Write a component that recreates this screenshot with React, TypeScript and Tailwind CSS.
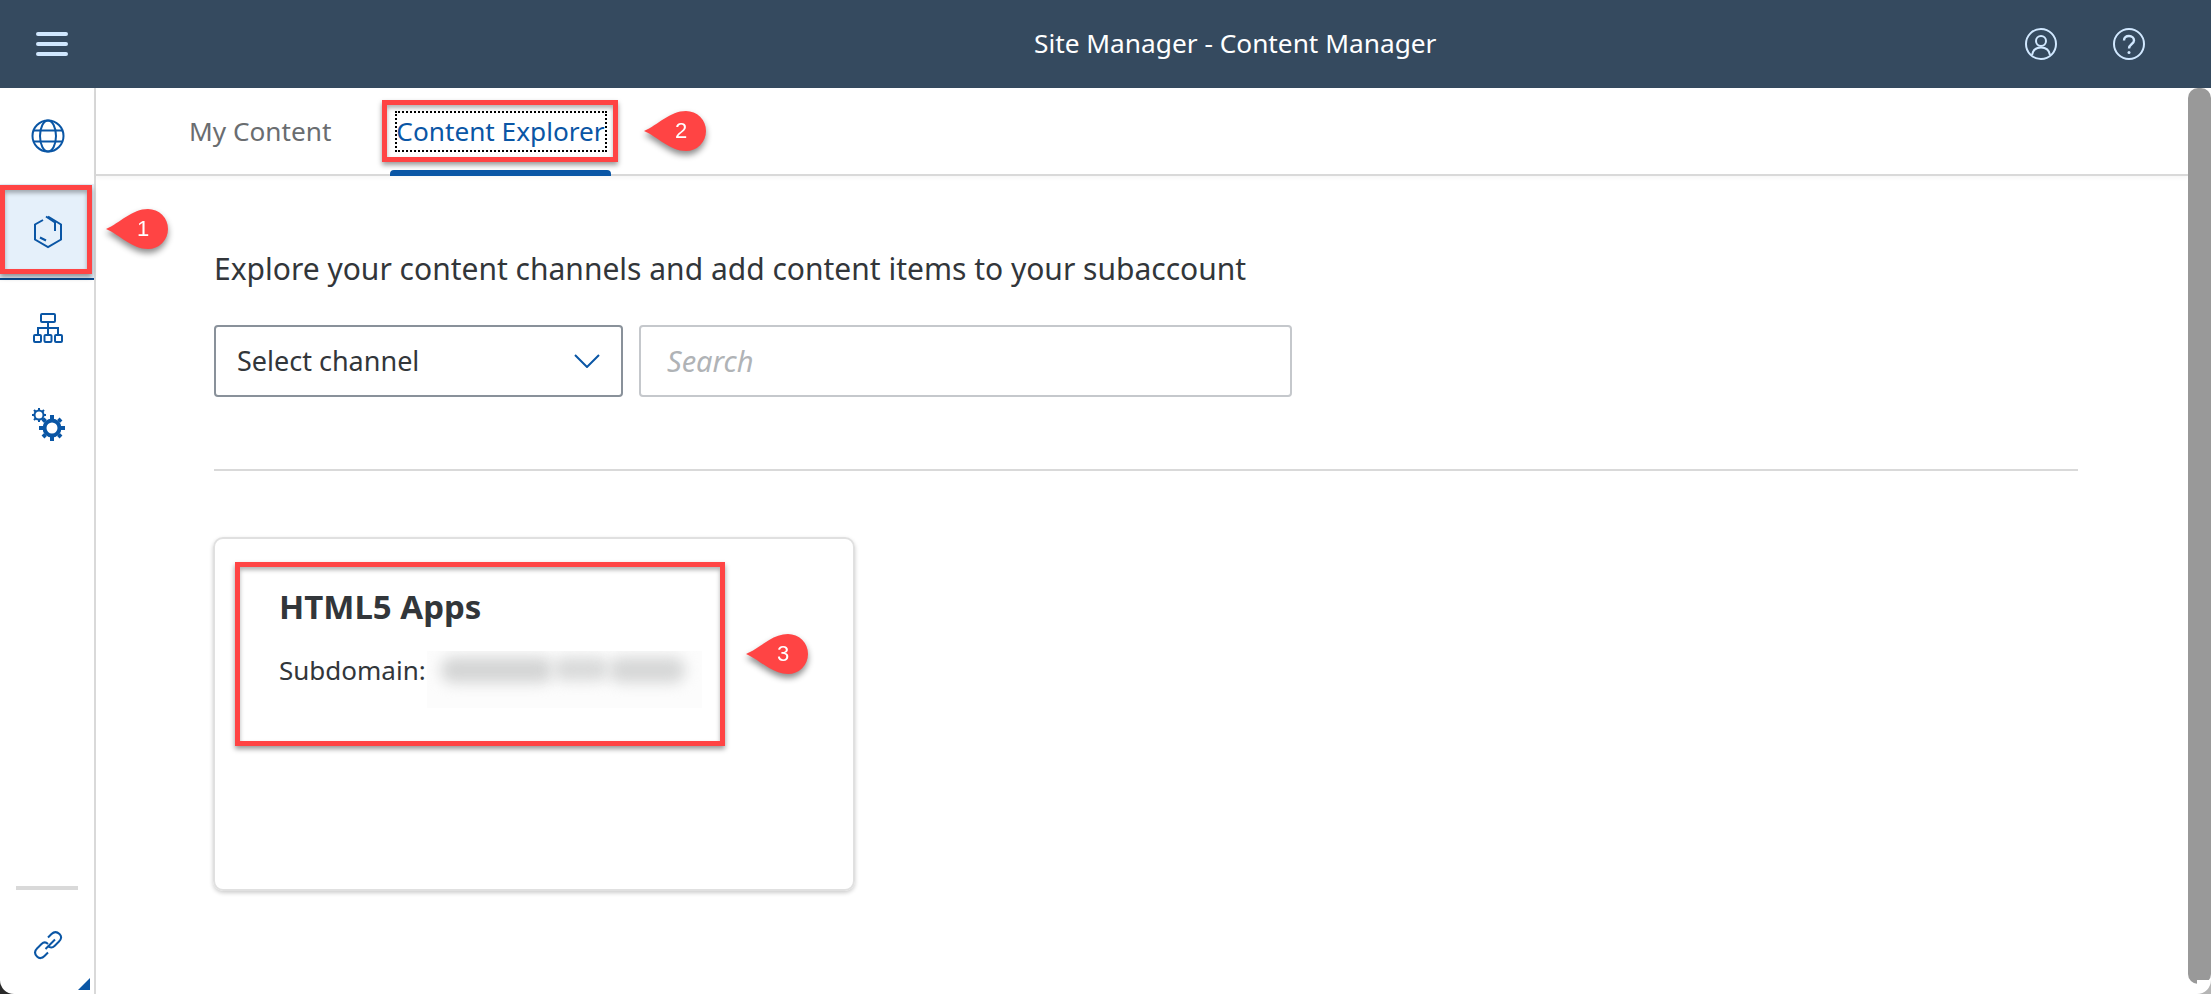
import React from 'react';

const sansFont = '[font-family:"Noto_Sans",sans-serif]';

const Badge = ({ label, className }: { label: string; className: string }) => (
  <div className={`absolute h-[40px] w-[62px] drop-shadow-[0_4px_3px_rgba(0,0,0,0.45)] ${className}`}>
    <svg width="62" height="40" viewBox="0 0 62 40" className="absolute inset-0">
      <path d="M0 20C14 14 26 0 42 0A20 20 0 0 1 42 40C26 40 14 26 0 20Z" fill="#ff4444" />
    </svg>
    <span className='absolute left-[17px] top-0 w-[40px] text-center text-[22px] leading-[40px] text-white [font-family:"Liberation_Sans",sans-serif]'>
      {label}
    </span>
  </div>
);

const Outline = ({ className }: { className: string }) => (
  <div className={`absolute border-[5px] border-[#ff4444] shadow-[0_3px_5px_rgba(0,0,0,0.4),inset_0_3px_4px_rgba(0,0,0,0.3)] ${className}`} />
);

const SideItem = ({ children, selected }: { children: React.ReactNode; selected?: boolean }) => (
  <div className={`flex h-[96px] items-center justify-center pl-[2px] ${selected ? 'border-b-2 border-[#0a4a8f] bg-[#e5f0fa]' : ''}`}>
    {children}
  </div>
);

const App = () => {
  return (
    <div className={`relative flex h-[994px] w-[2211px] flex-col overflow-hidden bg-white ${sansFont}`}>
      <header className="flex h-[88px] shrink-0 items-center bg-[#354a5f] pl-[36px] pr-[66px]">
        <svg width="32" height="24" viewBox="0 0 32 24">
          <path d="M2 2H30M2 12H30M2 22H30" stroke="#d1e8ff" strokeWidth="4" strokeLinecap="round" />
        </svg>
        <div className="ml-[966px] text-[26.25px] text-white">Site Manager - Content Manager</div>
        <div className="ml-auto flex items-center gap-[56px]">
          <svg width="32" height="32" viewBox="0 0 32 32" fill="none" stroke="#d1e8ff" strokeWidth="2">
            <circle cx="16" cy="16" r="15" />
            <circle cx="16" cy="13" r="5" />
            <path d="M7 27C8 21 12 19.500 16 19.500S24 21 25 27" />
          </svg>
          <svg width="32" height="32" viewBox="0 0 32 32" fill="none" stroke="#d1e8ff" strokeWidth="2">
            <circle cx="16" cy="16" r="15" />
            <path d="M11 12.500C11 9.500 13 8 16 8S21 10 21 12.500C21 16 16 16 16 20.500" strokeWidth="2.400" />
            <circle cx="16" cy="24.500" r="1.500" fill="#d1e8ff" stroke="none" />
          </svg>
        </div>
      </header>

      <div className="flex min-h-0 flex-1">
        <aside className="flex w-[96px] shrink-0 flex-col border-r-2 border-[#d9d9d9]">
          <SideItem>
            <svg width="34" height="34" viewBox="0 0 34 34" fill="none" stroke="#0a56a5" strokeWidth="2">
              <circle cx="17" cy="17" r="15.500" />
              <ellipse cx="17" cy="17" rx="8" ry="15.500" />
              <path d="M3 11.500H31M3 22.500H31" />
            </svg>
          </SideItem>
          <SideItem selected>
            <svg width="40" height="44" viewBox="0 0 40 44" fill="none" stroke="#0a56a5" strokeWidth="2">
              <path d="M15 11L7 15.500V30.500L20 38L33 30.500V15.500L20 7.500" />
              <path d="M18 7.500L27 13.500V22M12 28.500L18 31.500" />
            </svg>
          </SideItem>
          <SideItem>
            <svg width="30" height="30" viewBox="0 0 30 30" fill="none" stroke="#0a56a5" strokeWidth="2">
              <rect x="8" y="1" width="14" height="8" rx="1" />
              <path d="M15 9V21M5 21V15H25V21" />
              <rect x="1" y="22" width="7" height="7" rx="1" />
              <rect x="11.500" y="22" width="7" height="7" rx="1" />
              <rect x="22" y="22" width="7" height="7" rx="1" />
            </svg>
          </SideItem>
          <SideItem>
            <svg width="34" height="34" viewBox="0 0 34 34" fill="none" stroke="#0a56a5">
              <circle cx="8" cy="8" r="4.500" strokeWidth="2" />
              <path d="M8 1V3M8 13V15M1 8H3M13 8H15M3 3L4.500 4.500M11.500 11.500L13 13M13 3L11.500 4.500M4.500 11.500L3 13" strokeWidth="2" />
              <circle cx="21" cy="21" r="7.500" strokeWidth="4" />
              <path d="M21 8V12M21 30V34M8 21H12M30 21H34M12 12L14.500 14.500M27.500 27.500L30 30M30 12L27.500 14.500M14.500 27.500L12 30" strokeWidth="4" />
            </svg>
          </SideItem>
          <div className="mt-auto flex flex-col items-center pb-[4px]">
            <div className="h-[4px] w-[62px] bg-[#d9d9d9]" />
            <div className="mt-[40px] flex h-[60px] w-full items-start justify-center pl-[2px]">
              <svg width="30" height="30" viewBox="0 0 30 30" fill="none" stroke="#0a56a5" strokeWidth="2">
                <path d="M12.500 19L22 9.500M15 7.500L18.500 4C21 1.500 24 1.500 26.500 4S28.500 9 26 11.500L21.500 16C19.500 18 17 18 15 16" />
                <path d="M15 14C13 12 10.500 12 8.500 14L4 18.500C1.500 21 1.500 24 4 26.500S9 28.500 11.500 26L15 22.500" />
              </svg>
            </div>
          </div>
        </aside>

        <main className="flex min-w-0 flex-1 flex-col">
          <nav className="flex h-[88px] shrink-0 items-center gap-[65px] border-b-2 border-[#d9d9d9] pl-[93px] pt-[1px] text-[26.2px] shadow-[0_2px_4px_rgba(0,0,0,0.04)]">
            <span className="text-[#6a6d70]">My Content</span>
            <span className="relative text-[#0a56a5]">
              Content Explorer
              <span className="absolute -left-[1px] -right-[2px] top-[-1px] bottom-[-1px] border-2 border-dotted border-black" />
              <span className="absolute -left-[6px] -right-[6px] bottom-[-25px] h-[6px] rounded-t-[4px] bg-[#0a56a5]" />
            </span>
          </nav>
          <div className="flex flex-col pl-[118px] pr-[110px] pt-[75px]">
            <h1 className="text-[30px] font-normal leading-[36px] text-[#32363a]">
              Explore your content channels and add content items to your subaccount
            </h1>
            <div className="mt-[38px] flex gap-[16px]">
              <div className="flex h-[72px] w-[409px] items-center justify-between rounded-[4px] border-2 border-[#89919a] pl-[21px] pr-[21px] text-[27px] text-[#32363a]">
                Select channel
                <svg width="26" height="14" viewBox="0 0 26 14" fill="none" stroke="#0a56a5" strokeWidth="2">
                  <path d="M1 1L13 13L25 1" />
                </svg>
              </div>
              <div className="flex h-[72px] w-[653px] items-center rounded-[4px] border-2 border-[#c5c8cc] pl-[26px] text-[29px] italic text-[#b0b3b6]">
                Search
              </div>
            </div>
            <div className="mt-[72px] h-[2px] bg-[#d9d9d9]" />
            <div className="-ml-px mt-[66px] h-[354px] w-[642px] rounded-[10px] border-2 border-[#e0e0e0] pl-[64px] pt-[46px] shadow-[0_2px_4px_rgba(0,0,0,0.2)]">
              <div className="text-[33px] font-bold leading-[44px] text-[#32363a]">HTML5 Apps</div>
              <div className="mt-[23px] flex items-start text-[26px] leading-[36px] text-[#32363a]">
                Subdomain:
                <div className="-mt-px ml-[1px] flex h-[57px] w-[275px] items-start overflow-hidden bg-[#fcfcfc] pl-[14px] pt-[6px]">
                  <span className="h-[26px] w-[112px] shrink-0 rounded-[12px] bg-[#d4d5d5] blur-[7px]" />
                  <span className="h-[24px] w-[56px] shrink-0 rounded-[12px] bg-[#d9dada] blur-[7px]" />
                  <span className="h-[26px] w-[76px] shrink-0 rounded-[12px] bg-[#d6d7d7] blur-[7px]" />
                </div>
              </div>
            </div>
          </div>
        </main>

        <div className="flex w-[23px] shrink-0 flex-col pb-[10px]">
          <div className="flex-1 rounded-b-[10px] rounded-t-[10px] bg-[#999999]" />
        </div>
      </div>

      <div className="absolute bottom-[4px] left-[78px] h-0 w-0 border-b-[12px] border-l-[12px] border-b-[#0a56a5] border-l-transparent" />
      <div className="absolute bottom-0 left-0 h-[14px] w-[14px] bg-[#2a2a2a]">
        <div className="h-full w-full rounded-bl-[14px] bg-white" />
      </div>
      <div className="absolute bottom-0 right-0 h-[14px] w-[14px] bg-[#b5b5b5]">
        <div className="h-full w-full rounded-br-[14px] bg-white" />
      </div>

      <Outline className="left-0 top-[185px] h-[89px] w-[92px]" />
      <Outline className="left-[382px] top-[100px] h-[62px] w-[236px]" />
      <Outline className="left-[235px] top-[562px] h-[184px] w-[490px]" />
      <Badge label="1" className="left-[106px] top-[209px]" />
      <Badge label="2" className="left-[644px] top-[111px]" />
      <Badge label="3" className="left-[746px] top-[634px]" />
    </div>
  );
};

export default App;
